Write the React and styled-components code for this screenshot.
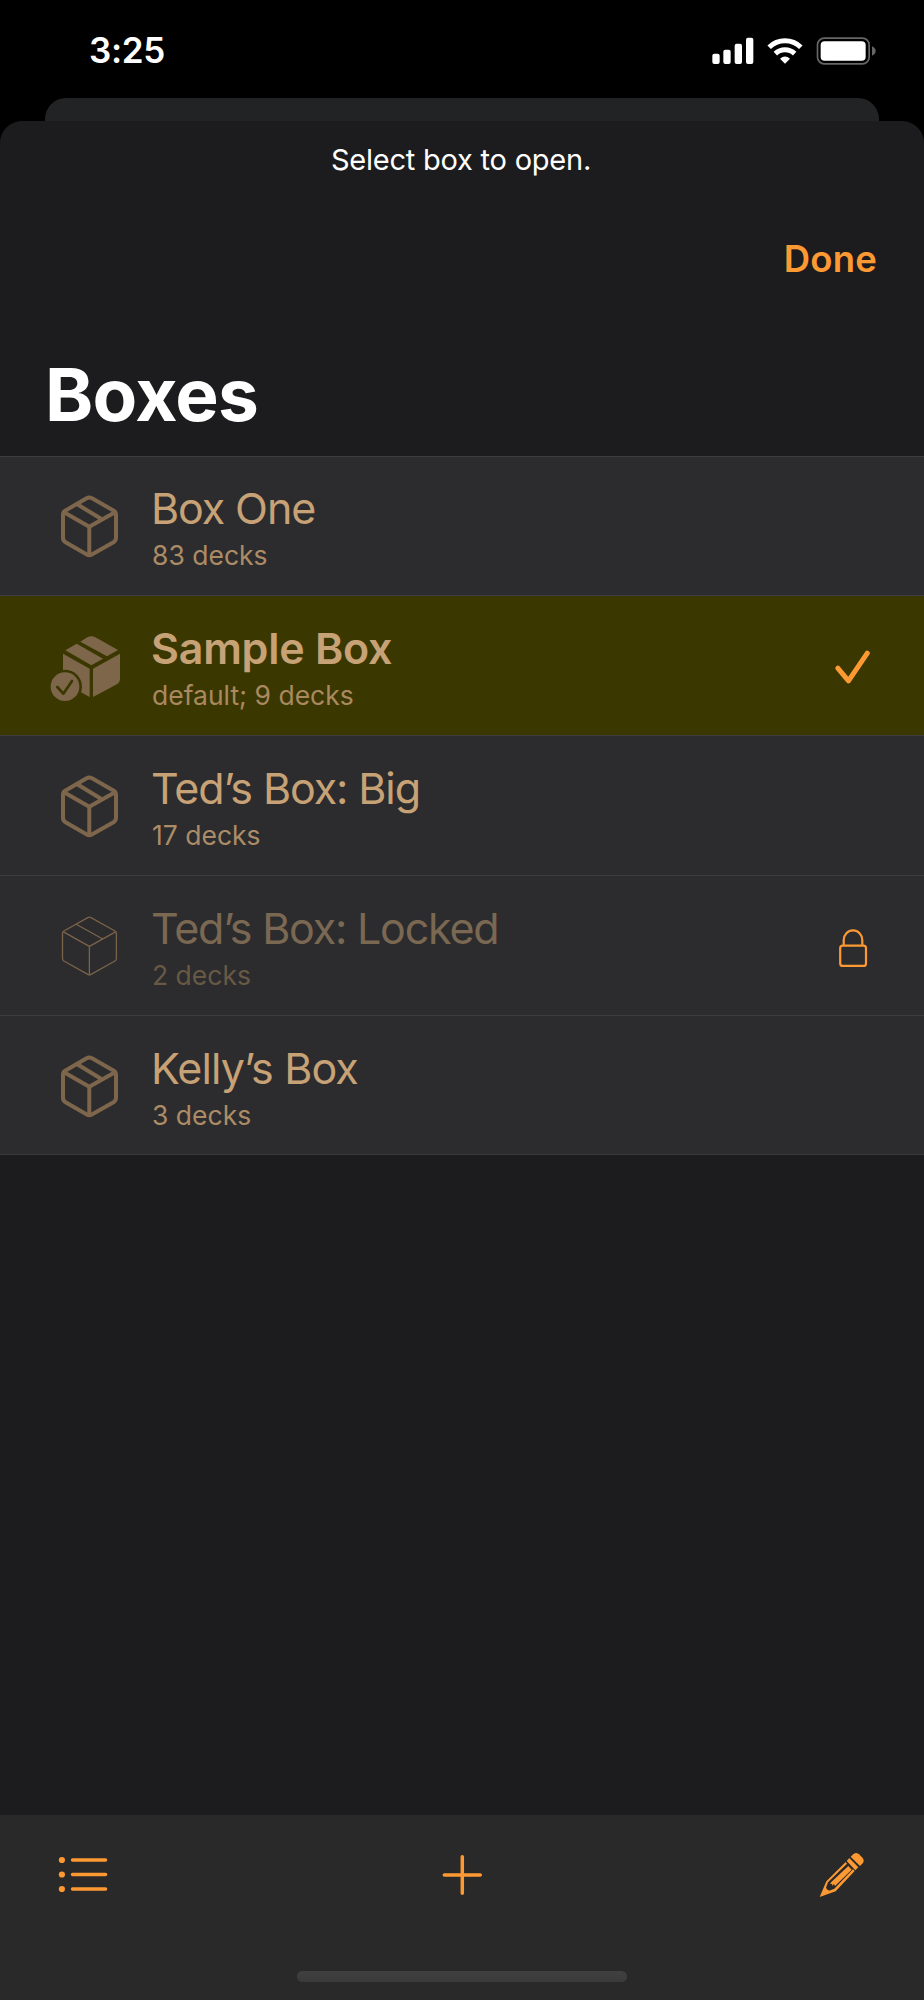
import React from 'react';
import styled, { createGlobalStyle } from 'styled-components';

const ACCENT = '#fd9932';

const GlobalStyle = createGlobalStyle`
  * { box-sizing: border-box; }
  body {
    margin: 0;
    background: #000;
    font-family: Inter, "Liberation Sans", sans-serif;
  }
  h1, p, ul { margin: 0; padding: 0; }
  svg { display: block; flex: none; }
`;

const Screen = styled.div`
  width: 924px;
  height: 2000px;
  display: flex;
  flex-direction: column;
  background: #000;
  overflow: hidden;
`;

const StatusBar = styled.header`
  flex: none;
  height: 98px;
  padding: 29px 48px 0 89px;
  display: flex;
  justify-content: space-between;
  align-items: flex-start;
`;

const Clock = styled.span`
  font-size: 35px;
  line-height: 43px;
  font-weight: 600;
  letter-spacing: -0.3px;
  color: #fff;
`;

const StatusGlyphs = styled.svg`
  width: 164px;
  height: 28px;
  margin-top: 8px;
`;

const BackCard = styled.div`
  flex: none;
  height: 23px;
  margin: 0 45px;
  border-radius: 21px 21px 0 0;
  background: #222324;
`;

const Sheet = styled.main`
  flex: 1;
  display: flex;
  flex-direction: column;
  border-radius: 22px 22px 0 0;
  background: #1c1c1e;
  overflow: hidden;
`;

const Hint = styled.p`
  padding: 21px 2px 0 0;
  text-align: center;
  font-size: 29px;
  line-height: 35px;
  letter-spacing: -0.23px;
  color: #fff;
`;

const NavBar = styled.div`
  display: flex;
  justify-content: flex-end;
  padding: 60px 47px 0 0;
`;

const TextButton = styled.button`
  border: 0;
  padding: 0;
  background: none;
  font: 600 36.5px/44px Inter, "Liberation Sans", sans-serif;
  letter-spacing: 0.2px;
  color: ${ACCENT};
`;

const Heading = styled.h1`
  padding: 70px 0 0 45px;
  height: 175px;
  font-size: 73px;
  line-height: 88px;
  font-weight: 700;
  letter-spacing: -0.74px;
  color: #fff;
`;

const List = styled.ul`
  list-style: none;
  border-bottom: 1px solid #39393c;
`;

const Row = styled.li`
  display: flex;
  align-items: flex-start;
  height: 140px;
  padding: 26px 0 0 50px;
  border-top: 1px solid #3d3d40;
  background: ${(p) => (p.$selected ? '#3a3800' : '#2c2c2e')};

  &:first-child { height: 139px; padding-top: 25px; }
  &:last-child { height: 139px; }
`;

const RowIcon = styled.div`
  width: 102px;
  height: 88px;
  display: flex;
  align-items: center;
`;

const RowText = styled.div`
  flex: 1;
`;

const Title = styled.div`
  font-size: 43px;
  line-height: 52px;
  margin-left: -1px;
  font-weight: ${(p) => (p.$selected ? 600 : 400)};
  letter-spacing: ${(p) => p.$tracking}px;
  color: ${(p) => (p.$locked ? '#7a6852' : '#c7a276')};
`;

const Subtitle = styled.div`
  margin-top: 5px;
  font-size: 26.5px;
  line-height: 32px;
  color: ${(p) => (p.$locked ? '#685945' : p.$selected ? '#aa8960' : '#ac8c66')};
`;

const Accessory = styled.div`
  width: 144px;
  height: 88px;
  padding-left: 52px;
  display: flex;
  align-items: center;
`;

const Toolbar = styled.footer`
  margin-top: auto;
  height: 185px;
  display: flex;
  flex-direction: column;
  align-items: center;
  justify-content: space-between;
  padding-bottom: 18px;
  background: #292929;
`;

const Tools = styled.nav`
  width: 100%;
  height: 120px;
  padding: 0 59px 0 58px;
  display: grid;
  grid-template-columns: 1fr auto 1fr;
  align-items: center;

  & > :last-child { justify-self: end; }
`;

const HomeIndicator = styled.div`
  width: 330px;
  height: 11px;
  border-radius: 6px;
  background: linear-gradient(#404040, #3b3b3b);
`;

function StatusIcons() {
  return (
    <StatusGlyphs viewBox="277 109 492 84" fill="#fff">
      <rect x="278" y="159" width="22" height="31" rx="6" />
      <rect x="311" y="147" width="22" height="43" rx="6" />
      <rect x="345" y="129" width="22" height="61" rx="6" />
      <rect x="379" y="111" width="22" height="79" rx="6" />
      <path
        d="M448.5 139.5 A68 68 0 0 1 543.5 139.5 M467 159 A42 42 0 0 1 525 159"
        fill="none"
        stroke="#fff"
        strokeWidth="15"
      />
      <path d="M481 174 Q496 161 511 174 L496 189Z" />
      <rect x="593.5" y="112.5" width="155" height="77" rx="20" fill="none" stroke="#666" strokeWidth="5" />
      <rect x="603" y="122" width="135" height="58" rx="12" />
      <path d="M757 137 Q768 142 768 151 Q768 160 757 165Z" fill="#666" />
    </StatusGlyphs>
  );
}

function BoxIcon() {
  return (
    <svg width="80" height="88" viewBox="50 482 80 88" fill="none" stroke="#7d664b" strokeWidth="4" strokeLinejoin="round">
      <path d="M86.6 498.3 Q89.3 496.9 92 498.3 L113.8 510.7 Q116 512 116 514.7 V537.8 Q116 540.8 113.5 542.2 L91.8 554.6 Q89.3 556 86.8 554.6 L65.5 542.2 Q63 540.8 63 537.8 V514.7 Q63 512 65.2 510.7Z" />
      <path d="M64 512.2 L89.3 526.8 L115 512.2 M89.3 526.8 V555 M77.3 504.3 L101 518.8" />
    </svg>
  );
}

function ThinBoxIcon() {
  return (
    <svg width="80" height="88" viewBox="50 902 80 88" fill="none" stroke="#7a6348" strokeWidth="1.3" strokeLinejoin="round">
      <path d="M87.8 917.6 Q89.4 916.7 91 917.6 L115 931 Q116.4 931.8 116.4 933.5 V958.5 Q116.4 960.2 115 961 L91 974.4 Q89.4 975.3 87.8 974.4 L63.9 961 Q62.5 960.2 62.5 958.5 V933.5 Q62.5 931.8 63.9 931Z" />
      <path d="M63 931.6 L89.4 946.4 L116 931.6 M89.4 946.4 V974.8 M76.2 924.2 L102.7 939" />
    </svg>
  );
}

function DefaultBoxIcon() {
  return (
    <svg width="80" height="88" viewBox="150 96 240 264" fill="#7d664a">
      <mask id="badge-gap">
        <rect x="150" y="96" width="240" height="264" fill="#fff" />
        <circle cx="195" cy="290" r="51" fill="#000" />
      </mask>
      <path d="M196 181 L230 161 L309 206 L274 226Z" />
      <path d="M241 155 L262 142 Q274 135 286 142 L354 180 L321 199Z" />
      <path mask="url(#badge-gap)" d="M189 191 L269 236 V321 L198 282 Q189 277 189 267Z" />
      <path d="M279 236 L360 191 V267 Q360 277 352 282 L279 321Z" />
      <circle cx="195" cy="290" r="43" />
      <path d="M172 291 L190 311 L216 273" fill="none" stroke="#3a3800" strokeWidth="8" strokeLinecap="round" strokeLinejoin="round" />
    </svg>
  );
}

function CheckIcon() {
  return (
    <svg width="40" height="40" viewBox="832 645.5 40 40" fill="none" stroke={ACCENT} strokeWidth="5" strokeLinecap="round" strokeLinejoin="round">
      <path d="M837.8 667.7 L848.5 680.3 L867.3 652.7" />
    </svg>
  );
}

function LockIcon() {
  return (
    <svg width="42" height="50" viewBox="832 921 42 50" fill="none" stroke={ACCENT} strokeWidth="2.2">
      <rect x="840.2" y="945.7" width="25.8" height="20.2" rx="2.5" />
      <path d="M843.7 945.5 V940 A9.3 9.7 0 0 1 862.3 940 V945.5" />
    </svg>
  );
}

function ListIcon() {
  return (
    <svg width="52" height="40" viewBox="58 1855 52 40" fill={ACCENT} stroke={ACCENT} strokeWidth="3.6" strokeLinecap="round">
      {[1860, 1874.5, 1889].map((y) => (
        <g key={y}>
          <circle cx="61.9" cy={y} r="3.1" stroke="none" />
          <path d={`M72.6 ${y} H105.5`} />
        </g>
      ))}
    </svg>
  );
}

function PlusIcon() {
  return (
    <svg width="44" height="44" viewBox="440 1853 44 44" stroke={ACCENT} strokeWidth="3.5" strokeLinecap="round">
      <path d="M444.3 1875 H480.3 M462.3 1856.8 V1893.2" />
    </svg>
  );
}

function PencilIcon() {
  return (
    <svg width="46" height="46" viewBox="163 153 138 138" fill={ACCENT}>
      <path d="M258 167 L264 161 Q273 152 283 160 L292 169 Q301 178 294 187 L286 195Z" />
      <path d="M246 180 L254 171 L281 199 L272 208Z" />
      <path d="M243 183 L185 241 L165 288 L213 271 L270 210 L265 205 L209 263 L198 268 Q188 270 184 260 L190 244 L247 188Z" />
      <path d="M251 195 L261 206 L211 255 L208 249 L202 255 L203 249 L196 248 L200 243Z" />
    </svg>
  );
}

const BOXES = [
  { title: 'Box One', subtitle: '83 decks', tracking: -1.1 },
  { title: 'Sample Box', subtitle: 'default; 9 decks', tracking: -0.26, selected: true },
  { title: 'Ted’s Box: Big', subtitle: '17 decks', tracking: -1.1 },
  { title: 'Ted’s Box: Locked', subtitle: '2 decks', tracking: -1.22, locked: true },
  { title: 'Kelly’s Box', subtitle: '3 decks', tracking: -0.88 },
];

function BoxRow({ title, subtitle, tracking, selected, locked }) {
  return (
    <Row $selected={selected}>
      <RowIcon>{selected ? <DefaultBoxIcon /> : locked ? <ThinBoxIcon /> : <BoxIcon />}</RowIcon>
      <RowText>
        <Title $selected={selected} $locked={locked} $tracking={tracking}>{title}</Title>
        <Subtitle $selected={selected} $locked={locked}>{subtitle}</Subtitle>
      </RowText>
      {(selected || locked) && <Accessory>{selected ? <CheckIcon /> : <LockIcon />}</Accessory>}
    </Row>
  );
}

export default function App() {
  return (
    <>
      <GlobalStyle />
      <Screen>
        <StatusBar>
          <Clock>3:25</Clock>
          <StatusIcons />
        </StatusBar>
        <BackCard />
        <Sheet>
          <Hint>Select box to open.</Hint>
          <NavBar>
            <TextButton>Done</TextButton>
          </NavBar>
          <Heading>Boxes</Heading>
          <List>
            {BOXES.map((box) => (
              <BoxRow key={box.title} {...box} />
            ))}
          </List>
          <Toolbar>
            <Tools>
              <ListIcon />
              <PlusIcon />
              <PencilIcon />
            </Tools>
            <HomeIndicator />
          </Toolbar>
        </Sheet>
      </Screen>
    </>
  );
}
